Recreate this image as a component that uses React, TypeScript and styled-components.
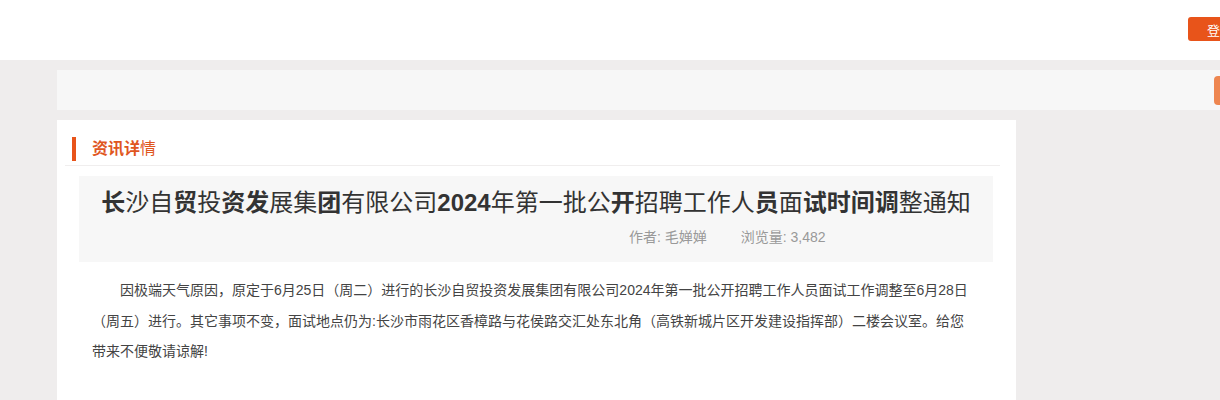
import React from "react";
import styled, { createGlobalStyle } from "styled-components";

const GlobalStyle = createGlobalStyle`
  html, body {
    margin: 0;
    padding: 0;
    background: #efeded;
    overflow-x: hidden;
    font-family: "Liberation Sans", "Noto Sans CJK SC", sans-serif;
    color: #333;
  }
`;

const Page = styled.div`
  width: 1300px;
`;

const Header = styled.header`
  height: 60px;
  background: #fff;
  display: flex;
  justify-content: flex-end;
  align-items: center;
  padding-right: 48px;
  box-sizing: border-box;
`;

const LoginBtn = styled.button`
  width: 64px;
  height: 24px;
  margin-top: -2px;
  border: 0;
  border-radius: 3px;
  background: #e8541a;
  color: #fff;
  font-family: inherit;
  font-size: 13px;
  padding: 0;
  cursor: pointer;
`;

const Body = styled.div`
  padding-left: 57px;
`;

const Crumbs = styled.div`
  margin-top: 10px;
  height: 40px;
  width: 1222px;
  background: #f7f7f7;
  display: flex;
  justify-content: flex-end;
  align-items: center;
  padding-right: 5px;
  box-sizing: border-box;
`;

const SearchBtn = styled.div`
  width: 60px;
  height: 29px;
  border-radius: 4px;
  background: #ee8650;
`;

const Card = styled.main`
  margin-top: 10px;
  width: 959px;
  min-height: 300px;
  background: #fff;
  padding: 17px 16px 20px 8px;
  box-sizing: border-box;
`;

const SectionHead = styled.div`
  display: flex;
  align-items: center;
  gap: 16px;
  padding: 0 0 4px 7px;
  border-bottom: 1px solid #f0eeee;
`;

const Accent = styled.span`
  width: 4px;
  height: 24px;
  background: #e8541a;
`;

const SectionTitle = styled.h2`
  margin: 0;
  font-size: 16px;
  font-weight: normal;
  color: #e0561e;
  line-height: 24px;
`;

const Strong = styled.b`
  font-weight: bold;
`;

const TitleBox = styled.div`
  margin: 10px 7px 0 14px;
  background: #f7f7f7;
  padding: 11px 0 15px;
`;

const Title = styled.h1`
  margin: 0;
  text-align: center;
  font-size: 24px;
  line-height: 32px;
  font-weight: normal;
  color: #333;
`;

const Meta = styled.div`
  margin-top: 8px;
  padding-left: 550px;
  display: flex;
  gap: 34px;
  font-size: 14px;
  line-height: 20px;
  color: #999;
`;

const Content = styled.p`
  margin: 13px 0 0 27px;
  width: 882px;
  font-size: 14px;
  line-height: 30.5px;
  color: #444;
  text-indent: 2em;
`;

export default function App() {
  return (
    <>
      <GlobalStyle />
      <Page>
        <Header>
          <LoginBtn>登录</LoginBtn>
        </Header>
        <Body>
          <Crumbs>
            <SearchBtn />
          </Crumbs>
          <Card>
            <SectionHead>
              <Accent />
              <SectionTitle>
                <Strong>资讯详</Strong>情
              </SectionTitle>
            </SectionHead>
            <TitleBox>
              <Title>
                <Strong>长</Strong>沙自<Strong>贸</Strong>投<Strong>资发</Strong>展集
                <Strong>团</Strong>有限公司<Strong>2024</Strong>年第一批公
                <Strong>开</Strong>招聘工作人<Strong>员</Strong>面
                <Strong>试时间调</Strong>整通知
              </Title>
              <Meta>
                <span>作者: 毛婵婵</span>
                <span>浏览量: 3,482</span>
              </Meta>
            </TitleBox>
            <Content>
              因极端天气原因，原定于6月25日（周二）进行的长沙自贸投资发展集团有限公司2024年第一批公开招聘工作人员面试工作调整至6月28日（周五）进行。其它事项不变，面试地点仍为:长沙市雨花区香樟路与花侯路交汇处东北角（高铁新城片区开发建设指挥部）二楼会议室。给您带来不便敬请谅解!
            </Content>
          </Card>
        </Body>
      </Page>
    </>
  );
}
